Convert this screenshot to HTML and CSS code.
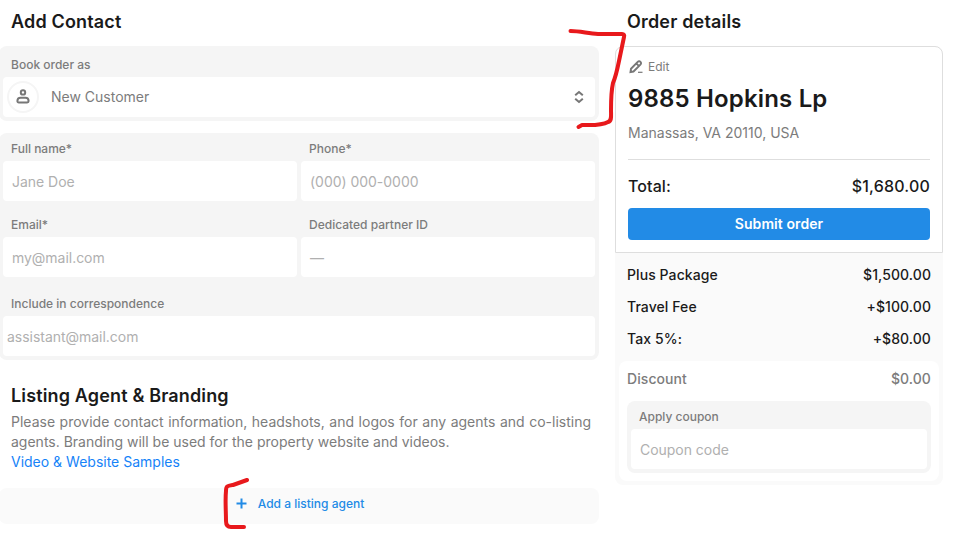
FILE: index.html
```html
<!DOCTYPE html>
<html lang="en">
<head>
<meta charset="utf-8">
<title>Add Contact</title>
<link rel="stylesheet" href="styles.css">
</head>
<body>
<div class="page">
  <main class="main">
    <h2 class="title">Add Contact</h2>
    <section class="panel booking">
      <div class="label">Book order as</div>
      <div class="box select">
        <span class="avatar"><svg width="14" height="16" viewBox="0 0 14 16" fill="none" stroke="#777" stroke-width="2"><circle cx="7" cy="3.400" r="2.200"/><path d="M4.600 8.700h4.800c2 0 3.200 1.500 3.200 3.400 0 .9-.5 1.400-1.400 1.400H2.800c-.9 0-1.400-.5-1.400-1.400 0-1.900 1.200-3.400 3.200-3.400z"/></svg></span>
        <span class="selected">New Customer</span>
        <svg class="chevrons" width="10" height="14" viewBox="0 0 10 14" fill="none" stroke="#777" stroke-width="2"><path d="M1.200 5.300L5 2l3.800 3.300M1.200 8.700L5 12l3.800-3.300"/></svg>
      </div>
    </section>
    <section class="panel contact">
      <div class="field"><div class="label">Full name*</div><div class="box input">Jane Doe</div></div>
      <div class="field"><div class="label">Phone*</div><div class="box input">(000) 000-0000</div></div>
      <div class="field"><div class="label">Email*</div><div class="box input">my@mail.com</div></div>
      <div class="field"><div class="label">Dedicated partner ID</div><div class="box input">—</div></div>
      <div class="field wide"><div class="label">Include in correspondence</div><div class="box input tight">assistant@mail.com</div></div>
    </section>
    <h2 class="title branding">Listing Agent &amp; Branding</h2>
    <p class="intro">Please provide contact information, headshots, and logos for any agents and co-listing agents. Branding will be used for the property website and videos.</p>
    <a class="samples">Video &amp; Website Samples</a>
    <div class="add"><svg width="11" height="11" viewBox="0 0 11 11" stroke="#228be6" stroke-width="2"><path d="M5.500 .5v10M.5 5.500h10"/></svg><span>Add a listing agent</span></div>
  </main>
  <aside class="aside">
    <h2 class="title">Order details</h2>
    <div class="order">
      <div class="summary">
        <div class="edit"><svg width="15" height="16" viewBox="0 0 15 16" fill="none" stroke="#777" stroke-width="1.900"><path d="M1.500 14l.5-3.200 6.700-6.900c.9-.9 2-.9 2.800-.1.800.8.800 1.900-.1 2.800l-6.900 6.900zM7.300 5.400l2.700 2.700"/><path d="M9 14.300h4.500" stroke-width="1.200"/></svg><span>Edit</span></div>
        <h1 class="address">9885 Hopkins Lp</h1>
        <div class="city">Manassas, VA 20110, USA</div>
        <div class="total"><span>Total:</span><span class="sum">$1,680.00</span></div>
        <div class="submit">Submit order</div>
      </div>
      <div class="lines">
        <div class="line"><span>Plus Package</span><span>$1,500.00</span></div>
        <div class="line"><span>Travel Fee</span><span>+$100.00</span></div>
        <div class="line"><span>Tax 5%:</span><span>+$80.00</span></div>
      </div>
      <div class="discount">
        <div class="line muted"><span>Discount</span><span>$0.00</span></div>
        <div class="coupon"><div class="label">Apply coupon</div><div class="box input">Coupon code</div></div>
      </div>
    </div>
  </aside>
</div>
<svg class="marks" width="962" height="551" viewBox="0 0 962 551" fill="none" stroke="#e8191c" stroke-width="4" stroke-linecap="round" stroke-linejoin="round"><path d="M570.500 31C580 31 588 33.500 598 34L622 34Q625 34 624 37L619 61C617 71 616 76 613 83C611 92 611 101 611 110C611 116 612 121 608 122C601 126 590 125 582 125L578.500 127"/><path d="M247 480L233 485C227 486 226 486 226 491C225 500 226 511 226 521Q226 527 231 527L244 527"/></svg>
</body>
</html>
```
FILE: styles.css
```css
* { box-sizing: border-box; }
body { margin: 0; width: 962px; height: 551px; overflow: hidden; background: #fff; color: #1a1a1a; font-family: Inter, "Liberation Sans", sans-serif; font-size: 14px; }
.page { display: flex; gap: 16px; margin-left: -1px; }
.main { width: 600px; }
.aside { width: 328px; }
.title { margin: 0; padding: 10px 12px 12px; font-size: 18px; line-height: 24px; font-weight: 600; letter-spacing: .17px; }
.panel { background: #f5f5f5; border-radius: 8px; padding: 0 4px 4px; }
.label { height: 28px; padding: 8px 8px 4px; font-size: 12px; line-height: 16px; font-weight: 500; color: #7c7c7c; }
.box { height: 40px; background: #fff; border-radius: 4px; display: flex; align-items: center; }
.booking { height: 75px; margin-bottom: 12px; }
.booking .label { height: 31px; padding-top: 11px; }
.select { padding: 0 11px 0 4px; color: #7c7c7c; }
.avatar { width: 32px; height: 32px; border: 2px solid #f5f5f5; border-radius: 50%; display: flex; align-items: center; justify-content: center; }
.selected { margin-left: 12px; flex: 1; padding-bottom: 1px; }
.contact { display: grid; grid-template-columns: 1fr 1fr; column-gap: 4px; row-gap: 8px; height: 227px; }
.wide { grid-column: 1 / 3; padding-top: 3px; }
.input { padding: 1px 9px 0; color: #b0b0b0; letter-spacing: -.03px; }
.tight { padding-left: 4px; }
.branding { padding: 24px 12px 4px; letter-spacing: .15px; }
.intro { margin: 0 8px 0 12px; line-height: 20px; color: #7c7c7c; text-align: justify; }
.samples { display: block; margin-left: 12px; line-height: 20px; color: #1683f8; }
.add { margin-top: 16px; height: 36px; padding: 0 0 5px 2px; display: flex; align-items: center; justify-content: center; gap: 11px; border-radius: 8px; background: #fafafa; color: #228be6; font-size: 12px; font-weight: 500; }
.order { height: 439px; background: #fafafa; border-radius: 8px; }
.summary { height: 207px; padding: 11px 12px 0; border: 1px solid #dedede; border-radius: 8px 8px 0 0; background: #fff; }
.edit { display: flex; align-items: center; gap: 4px; height: 16px; padding-left: 1px; font-size: 12px; color: #7c7c7c; }
.address { margin: 9px 0 0; font-size: 24px; line-height: 32px; font-weight: 600; letter-spacing: .16px; }
.city { height: 45px; padding-top: 8px; line-height: 20px; color: #7c7c7c; border-bottom: 1px solid #dedede; }
.total { height: 48px; padding-top: 4px; display: flex; align-items: center; justify-content: space-between; font-size: 16px; line-height: 20px; font-weight: 500; letter-spacing: .1px; }
.sum { letter-spacing: .2px; }
.submit { height: 32px; padding-bottom: 1px; display: flex; align-items: center; justify-content: center; border-radius: 4px; background: #228be6; color: #fff; font-weight: 600; letter-spacing: .08px; }
.lines { height: 108px; padding: 5px 12px 0; }
.line { height: 32px; display: flex; align-items: center; justify-content: space-between; font-weight: 500; letter-spacing: .08px; }
.muted { height: 36px; padding-bottom: 1px; color: #7c7c7c; margin-bottom: 4px; }
.discount { height: 120px; margin: 0 4px; padding: 0 8px; border-radius: 8px; background: #fff; }
.coupon { height: 72px; padding: 0 4px 4px; border-radius: 8px; background: #f5f5f5; }
.marks { position: absolute; left: 0; top: 0; }
```
